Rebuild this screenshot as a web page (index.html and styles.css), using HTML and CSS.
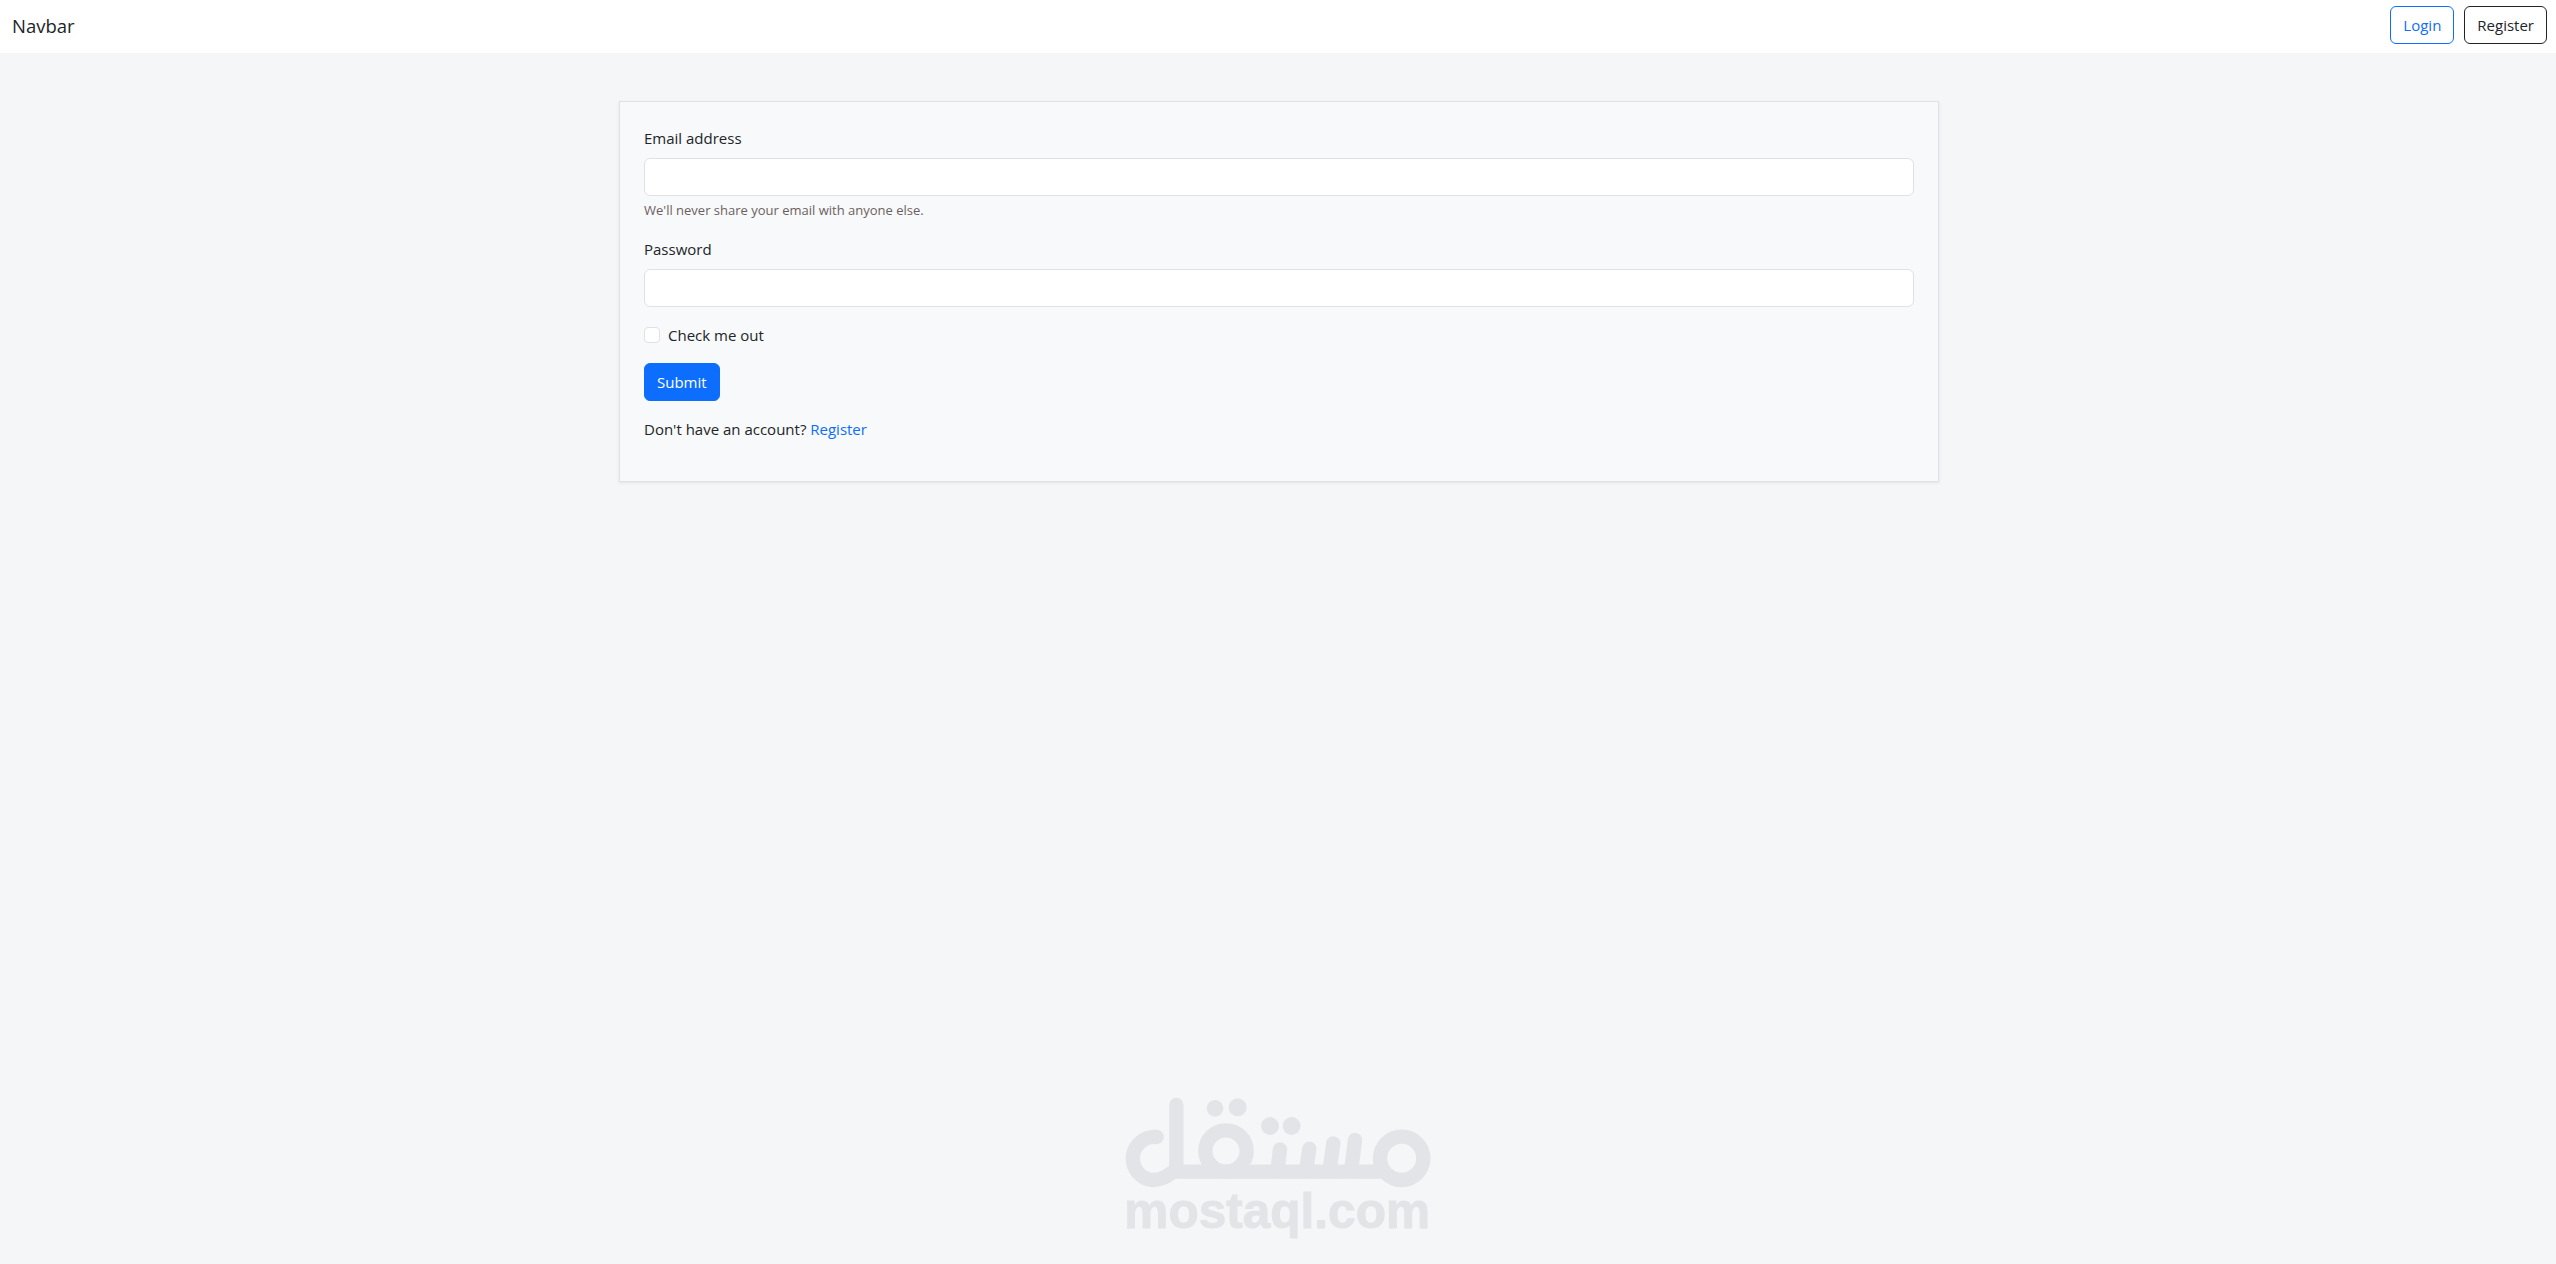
FILE: index.html
```html
<!DOCTYPE html>
<html lang="en">
<head>
<meta charset="utf-8">
<title>Navbar</title>
<link rel="stylesheet" href="styles.css">
</head>
<body>
<nav class="navbar">
  <a class="brand" href="#">Navbar</a>
  <div class="nav-actions">
    <a class="btn btn-outline-primary" href="#">Login</a>
    <a class="btn btn-outline-dark" href="#">Register</a>
  </div>
</nav>
<main class="container">
  <form class="card">
    <div class="field">
      <label class="label" for="email">Email address</label>
      <input class="input" id="email" type="email">
      <div class="help">We'll never share your email with anyone else.</div>
    </div>
    <div class="field">
      <label class="label" for="password">Password</label>
      <input class="input" id="password" type="password">
    </div>
    <div class="check">
      <span class="check-box"></span>
      <label class="check-label">Check me out</label>
    </div>
    <button class="btn btn-primary" type="button">Submit</button>
    <p class="signup">Don't have an account? <a class="link" href="#">Register</a></p>
  </form>
</main>
<svg class="watermark" viewBox="0 0 1110 552" width="370" height="184" aria-label="mostaql.com">
  <g class="wm-stroke">
    <path d="M200 171 A64 64 0 1 0 187 300 C215 300 232 288 250 275 L880 275"/>
    <path d="M259 75 V275"/>
    <circle cx="408" cy="213" r="62"/>
    <circle cx="935" cy="235" r="65"/>
    <path d="M570 208 L562 275"/>
    <path d="M658 206 L648 275"/>
    <path d="M730 190 L718 275"/>
    <path d="M795 180 L783 275"/>
  </g>
  <g class="wm-fill">
    <circle cx="375" cy="85" r="25"/>
    <circle cx="443" cy="82" r="27"/>
    <circle cx="540" cy="138" r="27"/>
    <circle cx="605" cy="138" r="27"/>
  </g>
  <text class="wm-text" x="103" y="444" textLength="917" lengthAdjust="spacingAndGlyphs">mostaql.com</text>
</svg>
</body>
</html>
```
FILE: styles.css
```css
* { box-sizing: border-box; }
html, body { height: 100%; }
body {
  margin: 0;
  background: #f5f6f8;
  color: #212529;
  font-family: "Open Sans", "Noto Sans", sans-serif;
  font-size: 15px;
  line-height: 24px;
  overflow: hidden;
  position: relative;
}
.navbar {
  height: 53px;
  background: #fff;
  display: flex;
  align-items: flex-start;
  justify-content: space-between;
  padding: 6px 9px 0 12px;
}
.brand {
  color: #212529;
  font-size: 18.5px;
  line-height: 30px;
  padding-top: 5px;
  text-decoration: none;
}
.nav-actions { display: flex; gap: 10px; }
.btn {
  display: inline-block;
  height: 38px;
  padding: 6px 12px;
  border: 1px solid transparent;
  border-radius: 6px;
  font: inherit;
  line-height: 24px;
  text-decoration: none;
}
.btn-outline-primary { color: #0d6efd; border-color: #0d6efd; }
.btn-outline-dark { color: #212529; border-color: #212529; }
.btn-primary { color: #fff; background: #0d6efd; border-color: #0d6efd; }
.container { width: 1320px; margin: 48px 0 0 619px; }
.card {
  display: block;
  background: #f8f9fa;
  border: 1px solid #dee2e6;
  padding: 24px 24px 24px;
  height: 381px;
  box-shadow: 0 1px 3px rgba(0, 0, 0, .08);
}
.field { margin-bottom: 16px; }
.label { display: block; margin-bottom: 8px; }
.input {
  display: block;
  width: 100%;
  height: 38px;
  background: #fff;
  border: 1px solid #dee2e6;
  border-radius: 6px;
}
.help { margin-top: 4px; font-size: 13px; line-height: 21px; color: #6c5f5f; }
.check { display: flex; align-items: center; gap: 8px; height: 24px; margin-bottom: 16px; }
.check-box {
  width: 16px;
  height: 16px;
  background: #fff;
  border: 1px solid #dee2e6;
  border-radius: 4px;
}
.signup { margin: 16px 0; }
.link { color: #0d6efd; text-decoration: none; }
.watermark { position: absolute; left: 1090px; top: 1080px; }
.wm-stroke { fill: none; stroke: #e3e4e7; stroke-width: 43; stroke-linecap: round; }
.wm-fill { fill: #e3e4e7; }
.wm-text {
  fill: #e3e4e7;
  stroke: #e3e4e7;
  stroke-width: 3;
  font-family: "Liberation Sans", Arial, sans-serif;
  font-weight: 700;
  font-size: 148px;
}
```
